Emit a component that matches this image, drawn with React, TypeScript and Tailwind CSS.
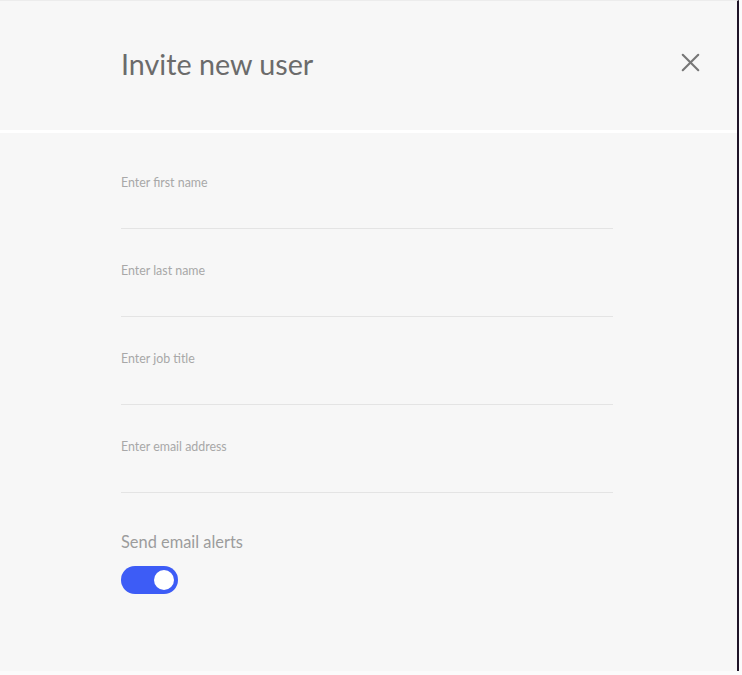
import { X } from "lucide-react";

const fields = [
  "Enter first name",
  "Enter last name",
  "Enter job title",
  "Enter email address",
];

export default function App() {
  return (
    <div className="flex h-[675px] w-[742px] flex-col bg-[#fbfbfb] font-['Lato',sans-serif]">
      <div className="flex h-[671px] w-[739px] flex-col border-r-2 border-t border-r-[#1f1428] border-t-[#ececec] bg-[#f7f7f7]">
        <header className="flex h-[132px] items-center justify-between border-b-[3px] border-white pl-[121px] pr-[31px] pb-[2px]">
          <h1 className="text-[28.7px] font-normal text-[#6b6b6b]">Invite new user</h1>
          <button className="mb-[4px] text-[#777777]">
            <X size={31} strokeWidth={1.6} />
          </button>
        </header>

        <form className="flex flex-col pl-[121px] pt-[42px]">
          {fields.map((label) => (
            <label key={label} className="mb-[34px] block w-[492px]">
              <span className="block text-[12.4px] leading-4 text-[#a8a8a8]">{label}</span>
              <input className="block h-[38px] w-full border-b border-[#e4e4e4] bg-transparent outline-none" />
            </label>
          ))}

          <span className="mt-[3px] text-[16.4px] leading-6 text-[#9c9c9c]">Send email alerts</span>
          <div className="mt-[12px] flex h-[28px] w-[57px] items-center justify-end rounded-full bg-[#3d5cf6] pr-[4px]">
            <div className="h-[20px] w-[20px] rounded-full bg-white" />
          </div>
        </form>
      </div>
    </div>
  );
}
